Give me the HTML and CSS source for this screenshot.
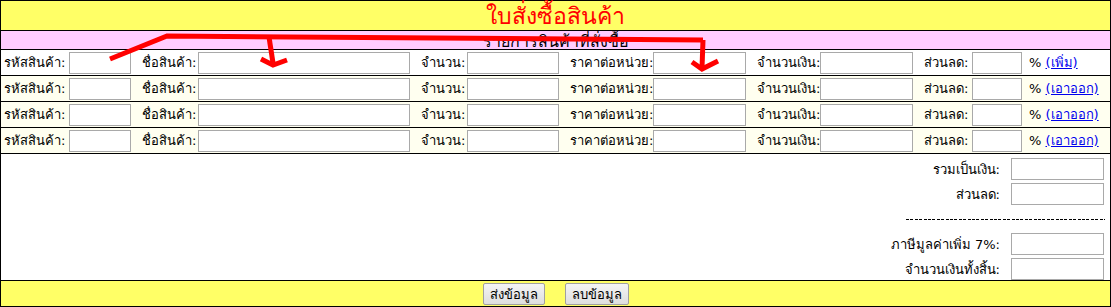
FILE: index.html
```html
<!DOCTYPE html>
<html>
<head>
    <title>ใบสั่งซื้อสินค้า</title>
    <meta charset="utf-8">

    <link rel="stylesheet" href="styles.css">
</head>

<body>
<div class="order_form">
    <div class="form_title">ใบสั่งซื้อสินค้า</div>
    <div class="form_subtitle">รายการสินค้าที่สั่งซื้อ</div>

    <div class="item_row first_row">
        <label class="col_label col_first">รหัสสินค้า:</label><input type="text">
        <label class="col_label">ชื่อสินค้า:</label><input type="text">
        <label class="col_label">จำนวน:</label><input type="text">
        <label class="col_label">ราคาต่อหน่วย:</label><input type="text">
        <label class="col_label">จำนวนเงิน:</label><input type="text">
        <label class="col_label">ส่วนลด:</label><input type="text">
        <span class="col_tail">% <a href="#">(เพิ่ม)</a></span>
    </div>
    <div class="item_row">
        <label class="col_label col_first">รหัสสินค้า:</label><input type="text">
        <label class="col_label">ชื่อสินค้า:</label><input type="text">
        <label class="col_label">จำนวน:</label><input type="text">
        <label class="col_label">ราคาต่อหน่วย:</label><input type="text">
        <label class="col_label">จำนวนเงิน:</label><input type="text">
        <label class="col_label">ส่วนลด:</label><input type="text">
        <span class="col_tail">% <a href="#">(เอาออก)</a></span>
    </div>
    <div class="item_row">
        <label class="col_label col_first">รหัสสินค้า:</label><input type="text">
        <label class="col_label">ชื่อสินค้า:</label><input type="text">
        <label class="col_label">จำนวน:</label><input type="text">
        <label class="col_label">ราคาต่อหน่วย:</label><input type="text">
        <label class="col_label">จำนวนเงิน:</label><input type="text">
        <label class="col_label">ส่วนลด:</label><input type="text">
        <span class="col_tail">% <a href="#">(เอาออก)</a></span>
    </div>
    <div class="item_row">
        <label class="col_label col_first">รหัสสินค้า:</label><input type="text">
        <label class="col_label">ชื่อสินค้า:</label><input type="text">
        <label class="col_label">จำนวน:</label><input type="text">
        <label class="col_label">ราคาต่อหน่วย:</label><input type="text">
        <label class="col_label">จำนวนเงิน:</label><input type="text">
        <label class="col_label">ส่วนลด:</label><input type="text">
        <span class="col_tail">% <a href="#">(เอาออก)</a></span>
    </div>

    <div class="totals">
        <label>รวมเป็นเงิน:</label><input type="text">
        <label>ส่วนลด:</label><input type="text">
        <div class="dash_line"></div>
        <label>ภาษีมูลค่าเพิ่ม 7%:</label><input type="text">
        <label>จำนวนเงินทั้งสิ้น:</label><input type="text">
    </div>

    <div class="form_buttons">
        <button type="button">ส่งข้อมูล</button>
        <button type="button">ลบข้อมูล</button>
    </div>
</div>

<!-- red marker drawn over the screenshot -->
<svg class="marker" width="1111" height="307" viewBox="0 0 1111 307">
    <polyline points="110,59 167,36 703,40" />
    <polyline points="269,37 273,63" />
    <polyline points="261,59 273,65 287,60" />
    <polyline points="703,40 702,68" />
    <polyline points="692,62 702,69 718,61" />
</svg>
</body>
</html>
```

FILE: styles.css
```css
body {
    margin: 0;
    font-family: Tahoma, "DejaVu Sans", "Noto Sans", sans-serif;
    font-size: 13px;
    color: #000;
}

.order_form {
    width: 1111px;
    height: 307px;
    box-sizing: border-box;
    border: 1px solid #000;
    display: flex;
    flex-direction: column;
}

.form_title {
    height: 29px;
    background-color: #ffff66;
    border-bottom: 1px solid #000;
    color: #ff0000;
    font-size: 23px;
    line-height: 30px;
    text-align: center;
}

.form_subtitle {
    height: 19px;
    background-color: #ffccff;
    border-bottom: 1px solid #000;
    font-size: 16px;
    line-height: 22px;
    text-align: center;
    overflow: hidden;
}

.item_row {
    height: 26px;
    border-bottom: 1px solid #000;
    background-color: #fffff0;
    display: grid;
    grid-template-columns: 68px 62px 67px 212px 57px 92px 94px 93px 74px 93px 59px 50px 1fr;
    align-items: center;
}
.first_row {background-color: #fff;}

.col_label {padding-left: 11px; white-space: nowrap;}
.col_first {padding-left: 3px;}
.col_tail {padding-left: 7px; white-space: nowrap;}
.col_tail a {color: #0000ee;}

input {
    height: 22px;
    width: 100%;
    box-sizing: border-box;
    border: 1px solid #a9a9a9;
    background: #fff;
    margin: 0;
}

.totals {
    flex: 1;
    border-bottom: 1px solid #000;
    padding: 4px 6px 0 0;
    display: grid;
    grid-template-columns: 1fr 93px;
    grid-auto-rows: 22px;
    column-gap: 11px;
    row-gap: 3px;
    align-items: center;
    text-align: right;
}
.totals .dash_line {
    grid-column: 1 / 3;
    justify-self: end;
    width: 199px;
    height: 1px;
    margin-right: -1px;
    background: repeating-linear-gradient(to right, #000 0 3px, transparent 3px 4.4px);
}

.form_buttons {
    height: 26px;
    background-color: #ffff66;
    display: flex;
    justify-content: center;
    align-items: center;
    gap: 20px;
}
.form_buttons button {
    height: 22px;
    padding: 0 6px;
    font-family: inherit;
    font-size: 13px;
    border: 1px solid #a0a0a0;
    border-radius: 2px;
    background: linear-gradient(#f4f4f4, #dedede);
}

.marker {
    position: absolute;
    left: 0;
    top: 0;
    pointer-events: none;
}
.marker polyline {
    fill: none;
    stroke: #ff0000;
    stroke-width: 5;
}
```
